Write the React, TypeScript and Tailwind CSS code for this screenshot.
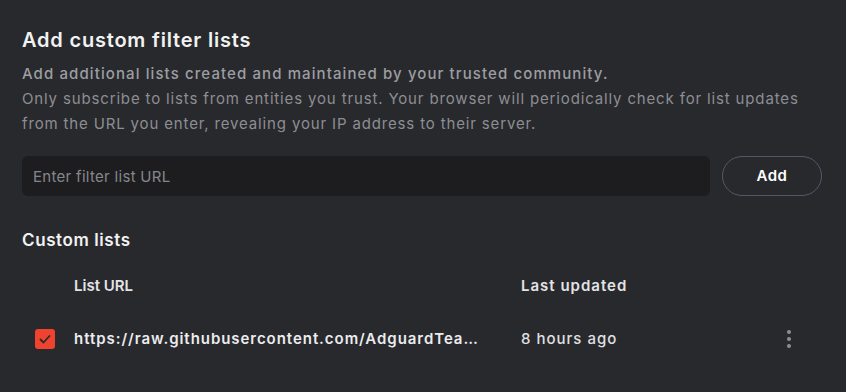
export default function App() {
  return (
    <div className="w-[846px] h-[392px] bg-[#28292d] text-white font-['Inter','Noto_Sans',sans-serif] px-[22px] pt-[27px] overflow-hidden">
      <h1 className="text-[20px] leading-[26px] font-semibold tracking-[0.8px] text-[#f2f2f2]">Add custom filter lists</h1>

      <div className="mt-[8px] text-[15px] leading-[25px] tracking-[0.85px] text-[#8d8e93] whitespace-nowrap">
        <p className="text-[#9d9ea2] font-medium tracking-[1.1px]">Add additional lists created and maintained by your trusted community.</p>
        <p>
          Only subscribe to lists from entities you trust. Your browser will periodically check for list updates
          <br />
          from the URL you enter, revealing your IP address to their server.
        </p>
      </div>

      <div className="mt-[20px] flex items-center gap-3">
        <input
          placeholder="Enter filter list URL"
          className="h-10 w-[688px] rounded-md bg-[#1d1d1f] px-[11px] text-[15px] tracking-[0.3px] text-white placeholder:text-[#86878b] outline-none"
        />
        <button className="h-10 w-[100px] rounded-full border border-[#555769] text-[15px] font-semibold tracking-[0.5px] text-white">
          Add
        </button>
      </div>

      <h2 className="mt-8 text-[17px] leading-[24px] font-semibold tracking-[0.6px] text-[#f2f2f2]">Custom lists</h2>

      <div className="mt-[14px]">
        <div className="flex h-10 items-center text-[15px] font-semibold text-[#e4e4e6]">
          <div className="w-[52px]" />
          <div className="w-[447px]">List URL</div>
          <div className="tracking-[1px]">Last updated</div>
        </div>
        <div className="flex h-[66px] items-center text-[15px]">
          <div className="w-[52px] flex pl-[13px]">
            <span className="flex h-5 w-5 items-center justify-center rounded-[3px] bg-[#f0432f]">
              <svg width="14" height="14" viewBox="0 0 14 14" fill="none" stroke="#2a2a2e" strokeWidth="1.8" strokeLinecap="round" strokeLinejoin="round">
                <path d="M2.5 7.5l3 3 6-6.5" />
              </svg>
            </span>
          </div>
          <div className="w-[408px] truncate font-semibold tracking-[0.95px] text-[#ececee]">
            https://raw.githubusercontent.com/AdguardTeam/FiltersRegistry/master/filters/filter_2_Base/filter.txt
          </div>
          <div className="w-[39px]" />
          <div className="w-[260px] font-medium tracking-[1px] text-[#e0e0e2]">8 hours ago</div>
          <div className="flex flex-col items-center gap-[3px] ml-[6px]">
            <span className="h-1 w-1 rounded-full bg-[#8e8f94]" />
            <span className="h-1 w-1 rounded-full bg-[#8e8f94]" />
            <span className="h-1 w-1 rounded-full bg-[#8e8f94]" />
          </div>
        </div>
      </div>
    </div>
  );
}
